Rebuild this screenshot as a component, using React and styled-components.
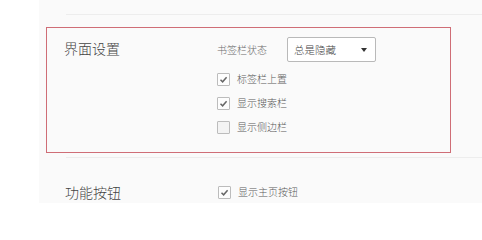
import React from "react";
import styled, { createGlobalStyle } from "styled-components";

const GlobalStyle = createGlobalStyle`
  html, body {
    margin: 0;
    padding: 0;
    background: #ffffff;
    font-family: "Noto Sans CJK SC", "Noto Sans", sans-serif;
  }
`;

const Page = styled.div`
  display: flex;
  height: 203px;
  overflow: hidden;
`;

const Sidebar = styled.div`
  width: 39px;
  flex-shrink: 0;
  background: #ffffff;
`;

const Main = styled.div`
  flex: 1;
  background: #fafafa;
  padding-left: 7px;
  padding-top: 14px;
`;

const Divider = styled.div`
  height: 1px;
  margin-left: 20px;
  background: #ededed;
`;

const Section = styled.div`
  display: grid;
  grid-template-columns: 153px 1fr;
  width: 386px;
  margin-top: ${(p) => (p.highlight ? "12px" : "0")};
  margin-bottom: ${(p) => (p.highlight ? "4px" : "0")};
  padding: ${(p) => (p.highlight ? "0 0 13px 17px" : "21px 0 0 18px")};
  border: ${(p) => (p.highlight ? "1px solid #cf6d76" : "1px solid transparent")};
  align-items: ${(p) => (p.highlight ? "start" : "center")};
`;

const Title = styled.div`
  font-size: 14px;
  font-weight: 300;
  line-height: 14px;
  color: #444;
  margin-top: ${(p) => (p.highlight ? "13px" : "0")};
`;

const Options = styled.div`
  display: flex;
  flex-direction: column;
  padding-top: ${(p) => (p.highlight ? "9px" : "0")};
`;

const SelectRow = styled.div`
  display: flex;
  align-items: center;
  height: 25px;
  margin-bottom: 5px;
`;

const SmallLabel = styled.span`
  font-size: 10px;
  font-weight: 300;
  line-height: 12px;
  color: #6a6a6a;
  width: 70px;
`;

const Select = styled.div`
  position: relative;
  box-sizing: border-box;
  width: 89px;
  height: 25px;
  border: 1px solid #b9b9b9;
  border-radius: 2px;
  background: #fff;
  display: flex;
  align-items: center;
  padding-left: 6px;
  font-size: 10.5px;
  font-weight: 300;
  color: #444;
`;

const Caret = styled.span`
  position: absolute;
  right: 8px;
  top: 10px;
  width: 0;
  height: 0;
  border-left: 3.5px solid transparent;
  border-right: 3.5px solid transparent;
  border-top: 4px solid #333;
`;

const CheckRow = styled.label`
  display: flex;
  align-items: center;
  height: 24px;
  gap: 7px;
`;

const Box = styled.span`
  box-sizing: border-box;
  width: 13px;
  height: 13px;
  border: 1px solid #bcbcbc;
  border-radius: 1px;
  background: ${(p) => (p.checked ? "#fdfdfd" : "#f3f3f3")};
  display: flex;
  align-items: center;
  justify-content: center;
`;

const CheckLabel = styled.span`
  font-size: 10px;
  font-weight: 300;
  line-height: 12px;
  color: #5a5a5a;
`;

function Check({ checked, label }) {
  return (
    <CheckRow>
      <Box checked={checked}>
        {checked && (
          <svg width="9" height="9" viewBox="0 0 9 9">
            <polyline
              points="1.5,4.8 3.6,6.8 7.6,2.3"
              fill="none"
              stroke="#666"
              strokeWidth="1.5"
            />
          </svg>
        )}
      </Box>
      <CheckLabel>{label}</CheckLabel>
    </CheckRow>
  );
}

export default function App() {
  return (
    <>
      <GlobalStyle />
      <Page>
        <Sidebar />
        <Main>
          <Divider />
          <Section highlight>
            <Title highlight>界面设置</Title>
            <Options highlight>
              <SelectRow>
                <SmallLabel>书签栏状态</SmallLabel>
                <Select>
                  总是隐藏
                  <Caret />
                </Select>
              </SelectRow>
              <Check checked label="标签栏上置" />
              <Check checked label="显示搜索栏" />
              <Check label="显示侧边栏" />
            </Options>
          </Section>
          <Divider />
          <Section>
            <Title>功能按钮</Title>
            <Options>
              <Check checked label="显示主页按钮" />
            </Options>
          </Section>
        </Main>
      </Page>
    </>
  );
}
